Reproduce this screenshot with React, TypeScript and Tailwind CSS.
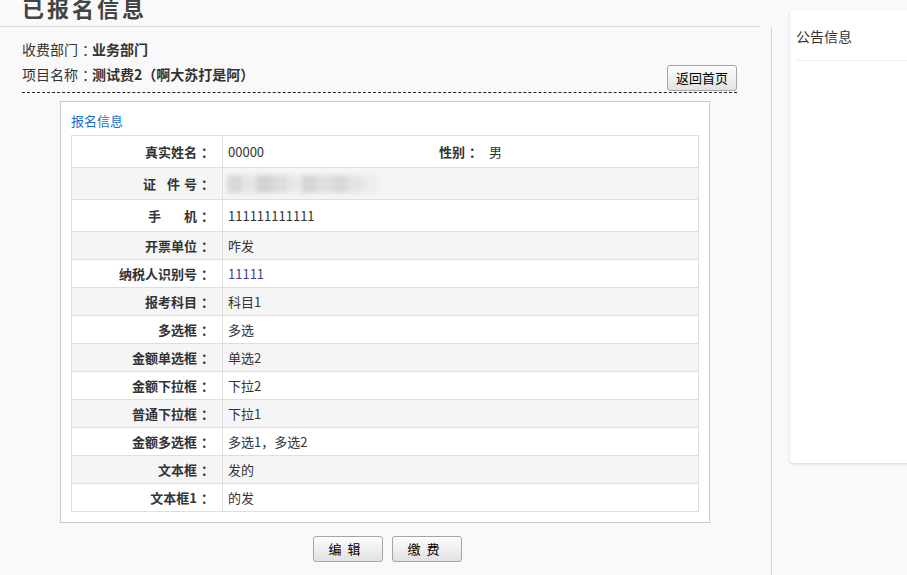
import React from "react";

const rows: { label: string; value: string; purple?: boolean }[] = [
  { label: "开票单位", value: "咋发" },
  { label: "纳税人识别号", value: "11111", purple: true },
  { label: "报考科目", value: "科目1" },
  { label: "多选框", value: "多选" },
  { label: "金额单选框", value: "单选2" },
  { label: "金额下拉框", value: "下拉2" },
  { label: "普通下拉框", value: "下拉1" },
  { label: "金额多选框", value: "多选1，多选2" },
  { label: "文本框", value: "发的" },
  { label: "文本框1", value: "的发" },
];

const font = "font-['Noto_Sans_CJK_SC','Liberation_Sans',sans-serif]";

// the installed font draws the full-width colon at the left of its box; pad it toward the middle
const Colon = () => <span className="pl-[4px] tracking-[-4px]">：</span>;

function Btn({ children, className = "" }: { children: React.ReactNode; className?: string }) {
  return (
    <button
      type="button"
      className={`h-[26px] w-[70px] rounded-[3px] border border-[#a5a5a5] bg-gradient-to-b from-[#fdfdfd] to-[#e2e2e2] text-[13px] leading-[24px] text-black ${className}`}
    >
      {children}
    </button>
  );
}

export default function App() {
  return (
    <div lang="zh-CN" className={`flex h-screen w-screen overflow-hidden bg-[#f9f9f9] text-[#333] ${font}`}>
      <div className="flex w-[772px] shrink-0 flex-col">
        <div className="h-[27px] w-[761px] shrink-0 overflow-hidden border-b border-[#dcdcdc]">
          <h1 className="-mt-[5px] pl-[22px] text-[22px] font-bold leading-[30px] tracking-[3px] text-[#444] font-['Liberation_Serif','Noto_Sans_CJK_SC',serif]">
            已报名信息
          </h1>
        </div>
        <div className="flex-1 border-r border-[#d5d5d5]">
          <div className="ml-[22px] w-[715px]">
            <div className="mt-[10px] text-[14px] leading-[24px]">
              收费部门<Colon /><span className="font-bold">业务部门</span>
            </div>
            <div className="flex items-end justify-between border-b border-dashed border-[#222]">
              <div className="mb-[6px] mt-px text-[14px] leading-[24px]">
                项目名称<Colon /><span className="font-bold">测试费2（啊大苏打是阿）</span>
              </div>
              <Btn className="mb-px">返回首页</Btn>
            </div>
            <div className="ml-[38px] mt-[8px] w-[650px] border border-[#c9c9c9] bg-white px-[10px] pb-[10px]">
              <div className="pb-[6px] pt-[11px] text-[13px] leading-[16px] text-[#1a6fc7]">报名信息</div>
              <table className="w-full border-collapse border border-[#dedede] text-[13px] leading-[18px]">
                <tbody>
                  <tr className="h-[32px] bg-white">
                    <td className="w-[151px] border border-[#dedede] pr-[12px] text-right font-bold">真实姓名<Colon /></td>
                    <td className="border border-[#dedede] pl-[5px]">
                      <div className="flex">
                        <span className="w-[211px]">00000</span>
                        <span className="w-[50px] font-bold">性别<Colon /></span>
                        <span>男</span>
                      </div>
                    </td>
                  </tr>
                  <tr className="h-[32px] bg-[#f5f5f5]">
                    <td className="border border-[#dedede] pr-[12px] text-right font-bold">
                      证<span className="inline-block w-[11px]" />件<span className="inline-block w-[4px]" />号<Colon />
                    </td>
                    <td className="border border-[#dedede] pl-[4px]">
                      <div className="flex h-[18px] w-[150px] blur-[2px]">
                        <div className="w-[15px] bg-[#d8d8d8]" />
                        <div className="w-[15px] bg-[#e6e6e6]" />
                        <div className="w-[15px] bg-[#d2d2d2]" />
                        <div className="w-[15px] bg-[#dcdcdc]" />
                        <div className="w-[15px] bg-[#e8e8e8]" />
                        <div className="w-[15px] bg-[#d6d6d6]" />
                        <div className="w-[15px] bg-[#e0e0e0]" />
                        <div className="w-[15px] bg-[#d9d9d9]" />
                        <div className="w-[15px] bg-[#e4e4e4]" />
                        <div className="w-[15px] bg-[#ececec]" />
                      </div>
                    </td>
                  </tr>
                  <tr className="h-[32px] bg-white">
                    <td className="border border-[#dedede] pr-[12px] text-right font-bold">
                      手<span className="inline-block w-[23px]" />机<Colon />
                    </td>
                    <td className="border border-[#dedede] pl-[5px]">111111111111</td>
                  </tr>
                  {rows.map((r, i) => (
                    <tr key={r.label} className={`h-[28px] ${i % 2 === 0 ? "bg-[#f5f5f5]" : "bg-white"}`}>
                      <td className="border border-[#dedede] pr-[12px] text-right font-bold">{r.label}<Colon /></td>
                      <td className={`border border-[#dedede] pl-[5px] ${r.purple ? "text-[#4b3d8f]" : ""}`}>{r.value}</td>
                    </tr>
                  ))}
                </tbody>
              </table>
            </div>
            <div className="ml-[38px] mt-[13px] flex w-[650px] justify-center gap-[9px] pl-[4px]">
              <Btn className="tracking-[6px]">编辑</Btn>
              <Btn className="tracking-[6px]">缴费</Btn>
            </div>
          </div>
        </div>
      </div>
      <div className="ml-[18px] mt-[10px] h-[453px] w-[200px] shrink-0 rounded-l-[3px] bg-white shadow-[0_1px_3px_rgba(0,0,0,0.15)]">
        <div className="mx-[6px] border-b border-[#eeeeee] pb-[14px] pt-[17px] text-[14px] leading-[19px] text-[#333]">
          公告信息
        </div>
      </div>
    </div>
  );
}
